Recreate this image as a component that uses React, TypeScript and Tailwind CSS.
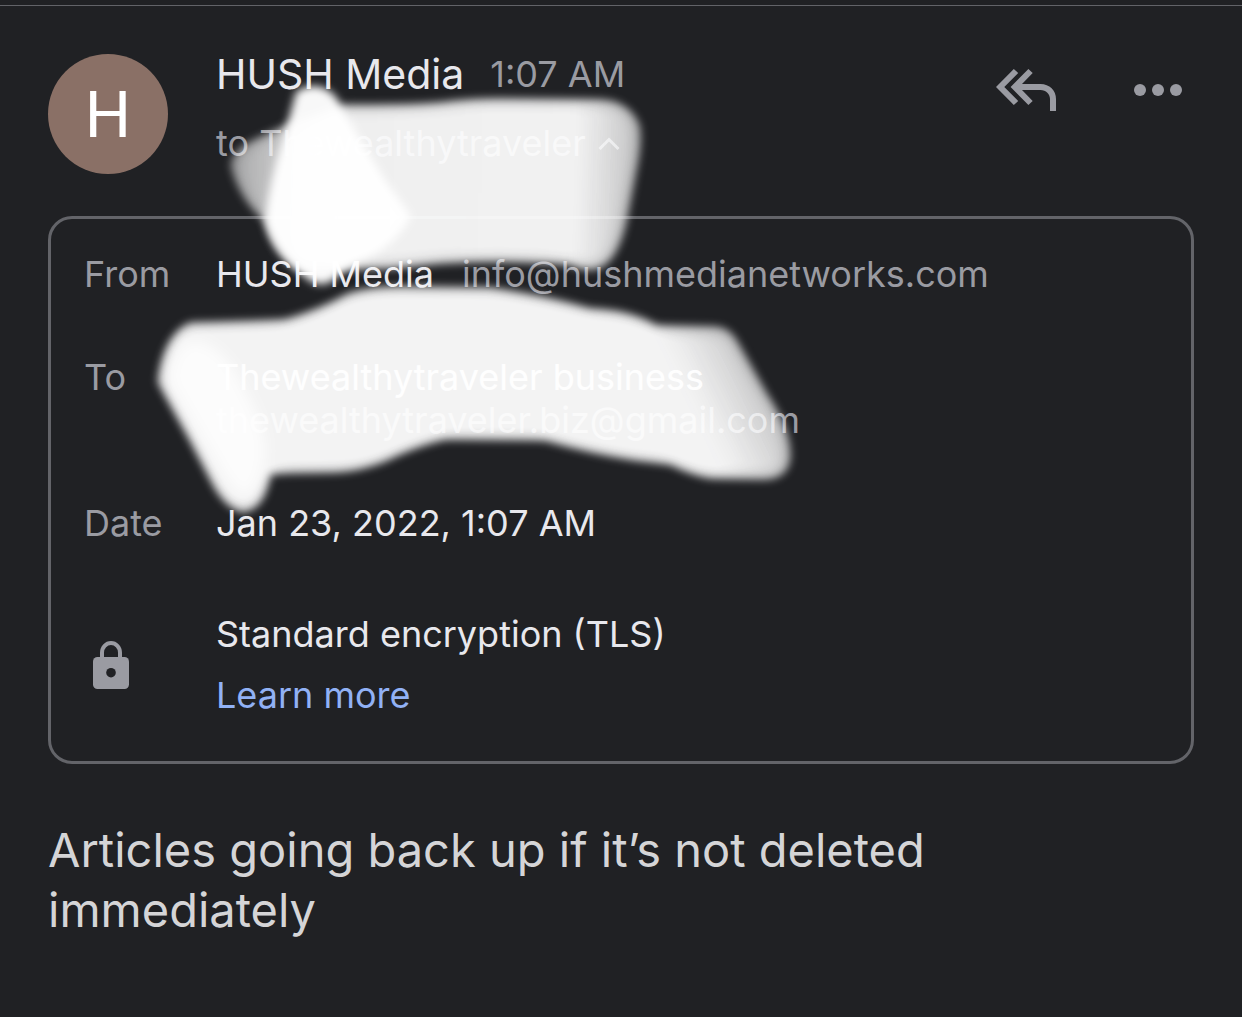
import type { ReactNode } from 'react';

function ReplyAllIcon() {
  return (
    <svg width="60" height="42" viewBox="0 0 60 42" fill="currentColor" aria-hidden="true">
      <path d="M17.8 0 L22.2 4 L8.3 18 L22.2 32 L17.8 36 L0 18 Z" />
      <path d="M32.4 0 L36.7 4 L26 15 H44.5 C53.5 15 60 21.5 60 30 V42 H54 V30 C54 25 50 21 44.5 21 H26 L36.7 32 L32.4 36 L14.6 18 Z" />
    </svg>
  );
}

function MoreIcon() {
  return (
    <svg width="48" height="12" viewBox="0 0 48 12" fill="currentColor" aria-hidden="true">
      <circle cx="6" cy="6" r="6" />
      <circle cx="24" cy="6" r="6" />
      <circle cx="42" cy="6" r="6" />
    </svg>
  );
}

function LockIcon() {
  return (
    <svg width="36" height="48" viewBox="0 0 36 48" aria-hidden="true">
      <path d="M9 18 V11.5 A9 9.5 0 0 1 27 11.5 V18" fill="none" stroke="#9a9ba2" strokeWidth="4" />
      <rect y="16" width="36" height="32" rx="4.5" fill="#9a9ba2" />
      <circle cx="18" cy="31.7" r="4.8" fill="#202124" />
    </svg>
  );
}

// marker strokes painted over the recipient
function Scribbles() {
  return (
    <svg className="absolute left-0 top-0 pointer-events-none" width="820" height="540" viewBox="0 0 820 540" aria-hidden="true">
      <defs>
        {/* soft edge plus a slower fade towards the middle of the stroke */}
        <filter id="brush" x="-10%" y="-10%" width="120%" height="120%" colorInterpolationFilters="sRGB">
          <feGaussianBlur in="SourceGraphic" stdDeviation="4" result="edge" />
          <feMorphology in="SourceAlpha" operator="dilate" radius="4" result="wide" />
          <feGaussianBlur in="wide" stdDeviation="10" result="blurred" />
          <feComponentTransfer in="blurred" result="fade">
            <feFuncA type="linear" slope="1.08" />
          </feComponentTransfer>
          <feComposite in="edge" in2="fade" operator="in" />
        </filter>
        <filter id="soft" x="-10%" y="-10%" width="120%" height="120%">
          <feGaussianBlur stdDeviation="4" />
        </filter>
        <filter id="softer" x="-20%" y="-20%" width="140%" height="140%">
          <feGaussianBlur stdDeviation="7" />
        </filter>
        <linearGradient id="upper" gradientUnits="userSpaceOnUse" x1="230" y1="0" x2="644" y2="12">
          <stop offset="0" stopColor="#fff" stopOpacity="0.74" />
          <stop offset="0.14" stopColor="#fff" stopOpacity="0.84" />
          <stop offset="0.3" stopColor="#fff" stopOpacity="0.93" />
          <stop offset="0.84" stopColor="#fff" stopOpacity="0.94" />
          <stop offset="1" stopColor="#fff" stopOpacity="0.82" />
        </linearGradient>
        <linearGradient id="lower" gradientUnits="userSpaceOnUse" x1="690" y1="410" x2="768" y2="372">
          <stop offset="0" stopColor="#fff" stopOpacity="0.95" />
          <stop offset="1" stopColor="#fff" stopOpacity="0.82" />
        </linearGradient>
      </defs>
      <path
        filter="url(#brush)"
        fill="url(#upper)"
        d="M229 165 Q232 148 255 138 L290 122 L345 103 Q400 104 440 101 Q470 97 500 97 L600 98 Q630 99 641 125 Q644 140 639 165 L628 222 Q618 264 598 270 Q585 274 570 266 Q500 261 440 265 L390 270 L300 272 Q270 255 264 222 Q238 200 229 165 Z"
      />
      <path
        filter="url(#soft)"
        fill="#fff"
        fillOpacity="0.97"
        d="M296 92 Q318 78 336 97 Q347 115 358 136 L385 180 L411 216 Q398 242 370 257 Q345 266 334 280 Q318 290 304 276 Q272 250 265 220 Q270 180 282 144 Z"
      />
      <path
        filter="url(#brush)"
        fill="url(#lower)"
        d="M156 382 Q162 333 190 321 Q235 320 285 318 Q320 308 348 292 Q370 285 400 285 L490 286 Q550 295 590 307 Q630 308 657 324 L715 325 Q730 326 738 340 L768 393 Q793 430 792 458 Q789 480 765 481 L710 480 Q690 476 670 466 L635 462 Q590 455 545 442 L445 441 Q415 448 385 463 Q360 473 335 474 L271 475 Q267 510 243 514 Q226 510 213 488 L187 438 Z"
      />
      <path
        filter="url(#softer)"
        fill="#fff"
        fillOpacity="0.75"
        d="M168 380 Q174 342 195 340 Q225 345 245 390 Q268 430 265 458 Q260 492 243 497 Q230 488 218 466 Z"
      />
    </svg>
  );
}

function Row({ label, children }: { label: ReactNode; children: ReactNode }) {
  return (
    <div className="grid grid-cols-[132px_1fr]">
      <dt className="text-[#9a9ba2]">{label}</dt>
      <dd>{children}</dd>
    </div>
  );
}

export default function App() {
  return (
    <main className="relative min-h-screen bg-[#202124] pt-[5px] pb-16 font-['Inter',sans-serif] text-[#e8e8ed]">
      <article className="border-t border-[#626368] px-12">
        <header className="flex items-start pt-11 pb-[42px]">
          <div className="mt-1 flex size-[120px] shrink-0 items-center justify-center rounded-full bg-[#8a7066] pt-[3px] font-['Roboto',sans-serif] text-[65px] text-white">
            H
          </div>
          <div className="ml-12 flex-1">
            <div className="flex items-center gap-[26px]">
              <h1 className="text-[41px] leading-[48px]">HUSH Media</h1>
              <time className="text-[36px] leading-[43px] text-[#9a9ba2]">1:07 AM</time>
            </div>
            <button type="button" aria-expanded="true" className="mt-6 flex items-center gap-3 text-[36px] leading-[43px] text-[#9a9ba2]">
              to Thewealthytraveler
              <svg width="22" height="14" viewBox="0 0 22 14" fill="none" stroke="currentColor" strokeWidth="3" aria-hidden="true">
                <path d="M1.5 12 L11 2.5 L20.5 12" />
              </svg>
            </button>
          </div>
          <div className="mr-3 flex items-center gap-[78px] text-[#9a9ba2]">
            <button type="button" aria-label="Reply all" className="mt-[19px]">
              <ReplyAllIcon />
            </button>
            <button type="button" aria-label="More options" className="mt-[19px]">
              <MoreIcon />
            </button>
          </div>
        </header>

        <dl className="flex flex-col gap-[60px] rounded-3xl border-[3px] border-[#636469] px-[33px] pt-[34px] pb-11 text-[36px] leading-[43px]">
          <Row label="From">
            <span>HUSH Media</span>
            <span className="ml-7 text-[#9a9ba2]">info@hushmedianetworks.com</span>
          </Row>
          <Row label="To">
            <p>Thewealthytraveler business</p>
            <p className="text-[#9a9ba2]">thewealthytraveler.biz@gmail.com</p>
          </Row>
          <Row label="Date">Jan 23, 2022, 1:07 AM</Row>
          <div className="grid grid-cols-[132px_1fr] items-center pt-2">
            <dt aria-label="Security" className="pl-[9px]">
              <LockIcon />
            </dt>
            <dd className="flex flex-col items-start gap-[18px]">
              <span>Standard encryption (TLS)</span>
              <a href="#tls" className="text-[#91b1f5]">Learn more</a>
            </dd>
          </div>
        </dl>

        <p className="mt-14 text-[47px] leading-[60px] text-[#d5d5d7]">
          Articles going back up if it’s not deleted immediately
        </p>
      </article>
      <Scribbles />
    </main>
  );
}
